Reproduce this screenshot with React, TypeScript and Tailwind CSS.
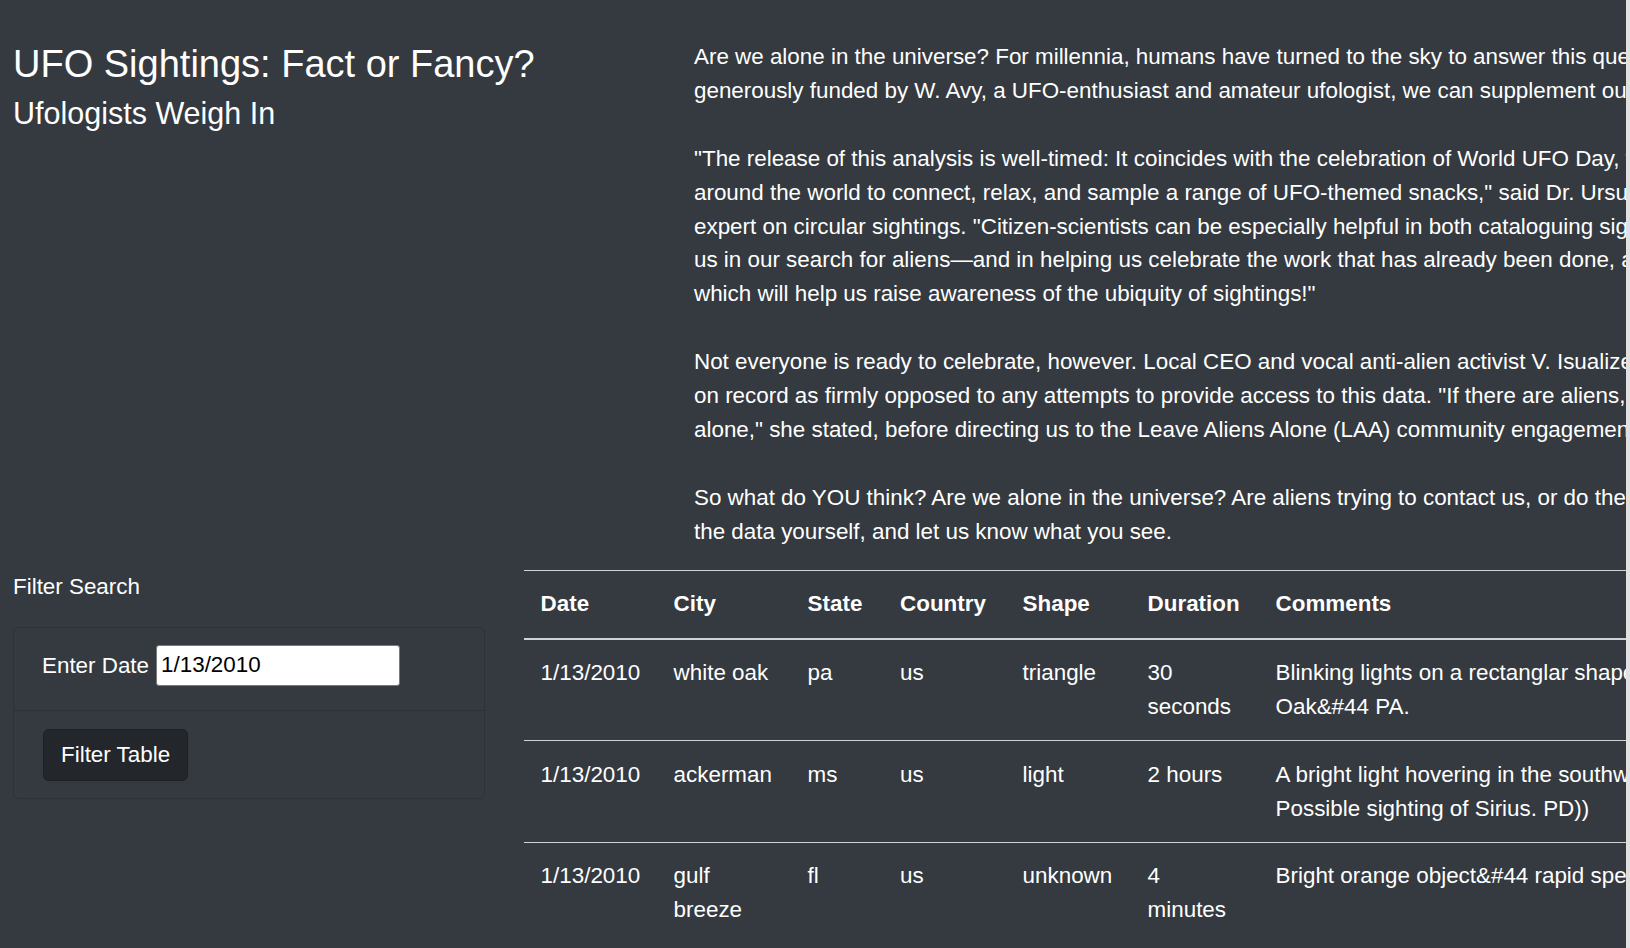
import React from "react";

const paragraphs: string[][] = [
  [
    "Are we alone in the universe? For millennia, humans have turned to the sky to answer this question. Now, thanks to a dataset",
    "generously funded by W. Avy, a UFO-enthusiast and amateur ufologist, we can supplement our observations with data.",
  ],
  [
    "\"The release of this analysis is well-timed: It coincides with the celebration of World UFO Day, when enthusiasts gather from",
    "around the world to connect, relax, and sample a range of UFO-themed snacks,\" said Dr. Ursula Ufo, a leading",
    "expert on circular sightings. \"Citizen-scientists can be especially helpful in both cataloguing sightings and in assisting",
    "us in our search for aliens\u2014and in helping us celebrate the work that has already been done, and in sharing the data,",
    "which will help us raise awareness of the ubiquity of sightings!\"",
  ],
  [
    "Not everyone is ready to celebrate, however. Local CEO and vocal anti-alien activist V. Isualize has gone",
    "on record as firmly opposed to any attempts to provide access to this data. \"If there are aliens, we should leave them",
    "alone,\" she stated, before directing us to the Leave Aliens Alone (LAA) community engagement website.",
  ],
  [
    "So what do YOU think? Are we alone in the universe? Are aliens trying to contact us, or do they not care? Explore",
    "the data yourself, and let us know what you see.",
  ],
];

const rows = [
  {
    date: "1/13/2010",
    city: ["white oak"],
    state: "pa",
    country: "us",
    shape: "triangle",
    duration: ["30", "seconds"],
    comments: ["Blinking lights on a rectanglar shaped object over White", "Oak&#44 PA."],
  },
  {
    date: "1/13/2010",
    city: ["ackerman"],
    state: "ms",
    country: "us",
    shape: "light",
    duration: ["2 hours"],
    comments: ["A bright light hovering in the southwest sky for two hours.", "Possible sighting of Sirius. PD))"],
  },
  {
    date: "1/13/2010",
    city: ["gulf", "breeze"],
    state: "fl",
    country: "us",
    shape: "unknown",
    duration: ["4", "minutes"],
    comments: ["Bright orange object&#44 rapid speed&#44 no sound."],
  },
];

function Lines({ lines }: { lines: string[] }) {
  return (
    <>
      {lines.map((l, i) => (
        <span key={i} className="block whitespace-nowrap">
          {l}
        </span>
      ))}
    </>
  );
}

export default function App() {
  return (
    <div className="relative w-[1630px] h-[948px] overflow-hidden bg-[#343a40] text-white font-['Liberation_Sans',Arial,sans-serif] text-[22.4px] leading-[33.9px] pt-[40px]">
      {/* top: title + story */}
      <div className="flex items-start">
        <div className="w-[694px] shrink-0 pl-[13px]">
          <h1 className="mt-[2.2px] text-[38px] leading-[45.6px] font-normal whitespace-nowrap">
            UFO Sightings: Fact or Fancy?
          </h1>
          <h2 className="mt-[7.7px] text-[30.5px] leading-[36.6px] font-normal whitespace-nowrap">
            Ufologists Weigh In
          </h2>
        </div>
        <div className="shrink-0">
          {paragraphs.map((p, i) => (
            <p key={i} className={i < paragraphs.length - 1 ? "mb-[33.9px]" : ""}>
              <Lines lines={p} />
            </p>
          ))}
        </div>
      </div>

      {/* bottom: filter + table */}
      <div className="flex items-start mt-[21.5px]">
        <div className="w-[524px] shrink-0 pl-[13px] pr-[39px]">
          <h5 className="font-normal">Filter Search</h5>
          <div className="mt-[23px] border border-[#2d3237] rounded-[5.6px]">
            <div className="flex items-center gap-[7px] px-[28px] pt-[17px] pb-[24.4px] border-b border-[#2d3237]">
              <label htmlFor="datetime" className="whitespace-nowrap">Enter Date</label>
              <input
                id="datetime"
                type="text"
                defaultValue="1/13/2010"
                className="w-[244px] h-[41px] bg-white text-black border border-[#7a7a7a] rounded-[3px] px-[4px] text-[22.4px] font-['Liberation_Sans',Arial,sans-serif] outline-none"
              />
            </div>
            <div className="px-[29px] pt-[17.6px] pb-[16.6px]">
              <button className="h-[52.4px] px-[17px] flex items-center bg-[#23272b] border border-[#1d2124] rounded-[5.6px] text-white whitespace-nowrap">
                Filter Table
              </button>
            </div>
          </div>
        </div>

        <table className="table-fixed border-collapse shrink-0 w-[1380px]">
          <colgroup>
            <col className="w-[133px]" />
            <col className="w-[134px]" />
            <col className="w-[92.5px]" />
            <col className="w-[122.5px]" />
            <col className="w-[125px]" />
            <col className="w-[128px]" />
            <col />
          </colgroup>
          <thead>
            <tr>
              {["Date", "City", "State", "Country", "Shape", "Duration", "Comments"].map((h) => (
                <th
                  key={h}
                  className="text-left align-bottom font-bold px-[16.6px] py-[16.4px] border-t border-b-[2px] border-[#cfd3d7] whitespace-nowrap"
                >
                  {h}
                </th>
              ))}
            </tr>
          </thead>
          <tbody>
            {rows.map((r, i) => (
              <tr key={i}>
                <td className="align-top px-[16.6px] py-[16.4px] border-t border-[#cfd3d7] whitespace-nowrap">{r.date}</td>
                <td className="align-top px-[16.6px] py-[16.4px] border-t border-[#cfd3d7]"><Lines lines={r.city} /></td>
                <td className="align-top px-[16.6px] py-[16.4px] border-t border-[#cfd3d7] whitespace-nowrap">{r.state}</td>
                <td className="align-top px-[16.6px] py-[16.4px] border-t border-[#cfd3d7] whitespace-nowrap">{r.country}</td>
                <td className="align-top px-[16.6px] py-[16.4px] border-t border-[#cfd3d7] whitespace-nowrap">{r.shape}</td>
                <td className="align-top px-[16.6px] py-[16.4px] border-t border-[#cfd3d7]"><Lines lines={r.duration} /></td>
                <td className="align-top px-[16.6px] py-[16.4px] border-t border-[#cfd3d7]"><Lines lines={r.comments} /></td>
              </tr>
            ))}
          </tbody>
        </table>
      </div>

      {/* window edge strip */}
      <div className="absolute top-0 right-0 w-[4px] h-full bg-[#e1e1e1]" />
    </div>
  );
}
